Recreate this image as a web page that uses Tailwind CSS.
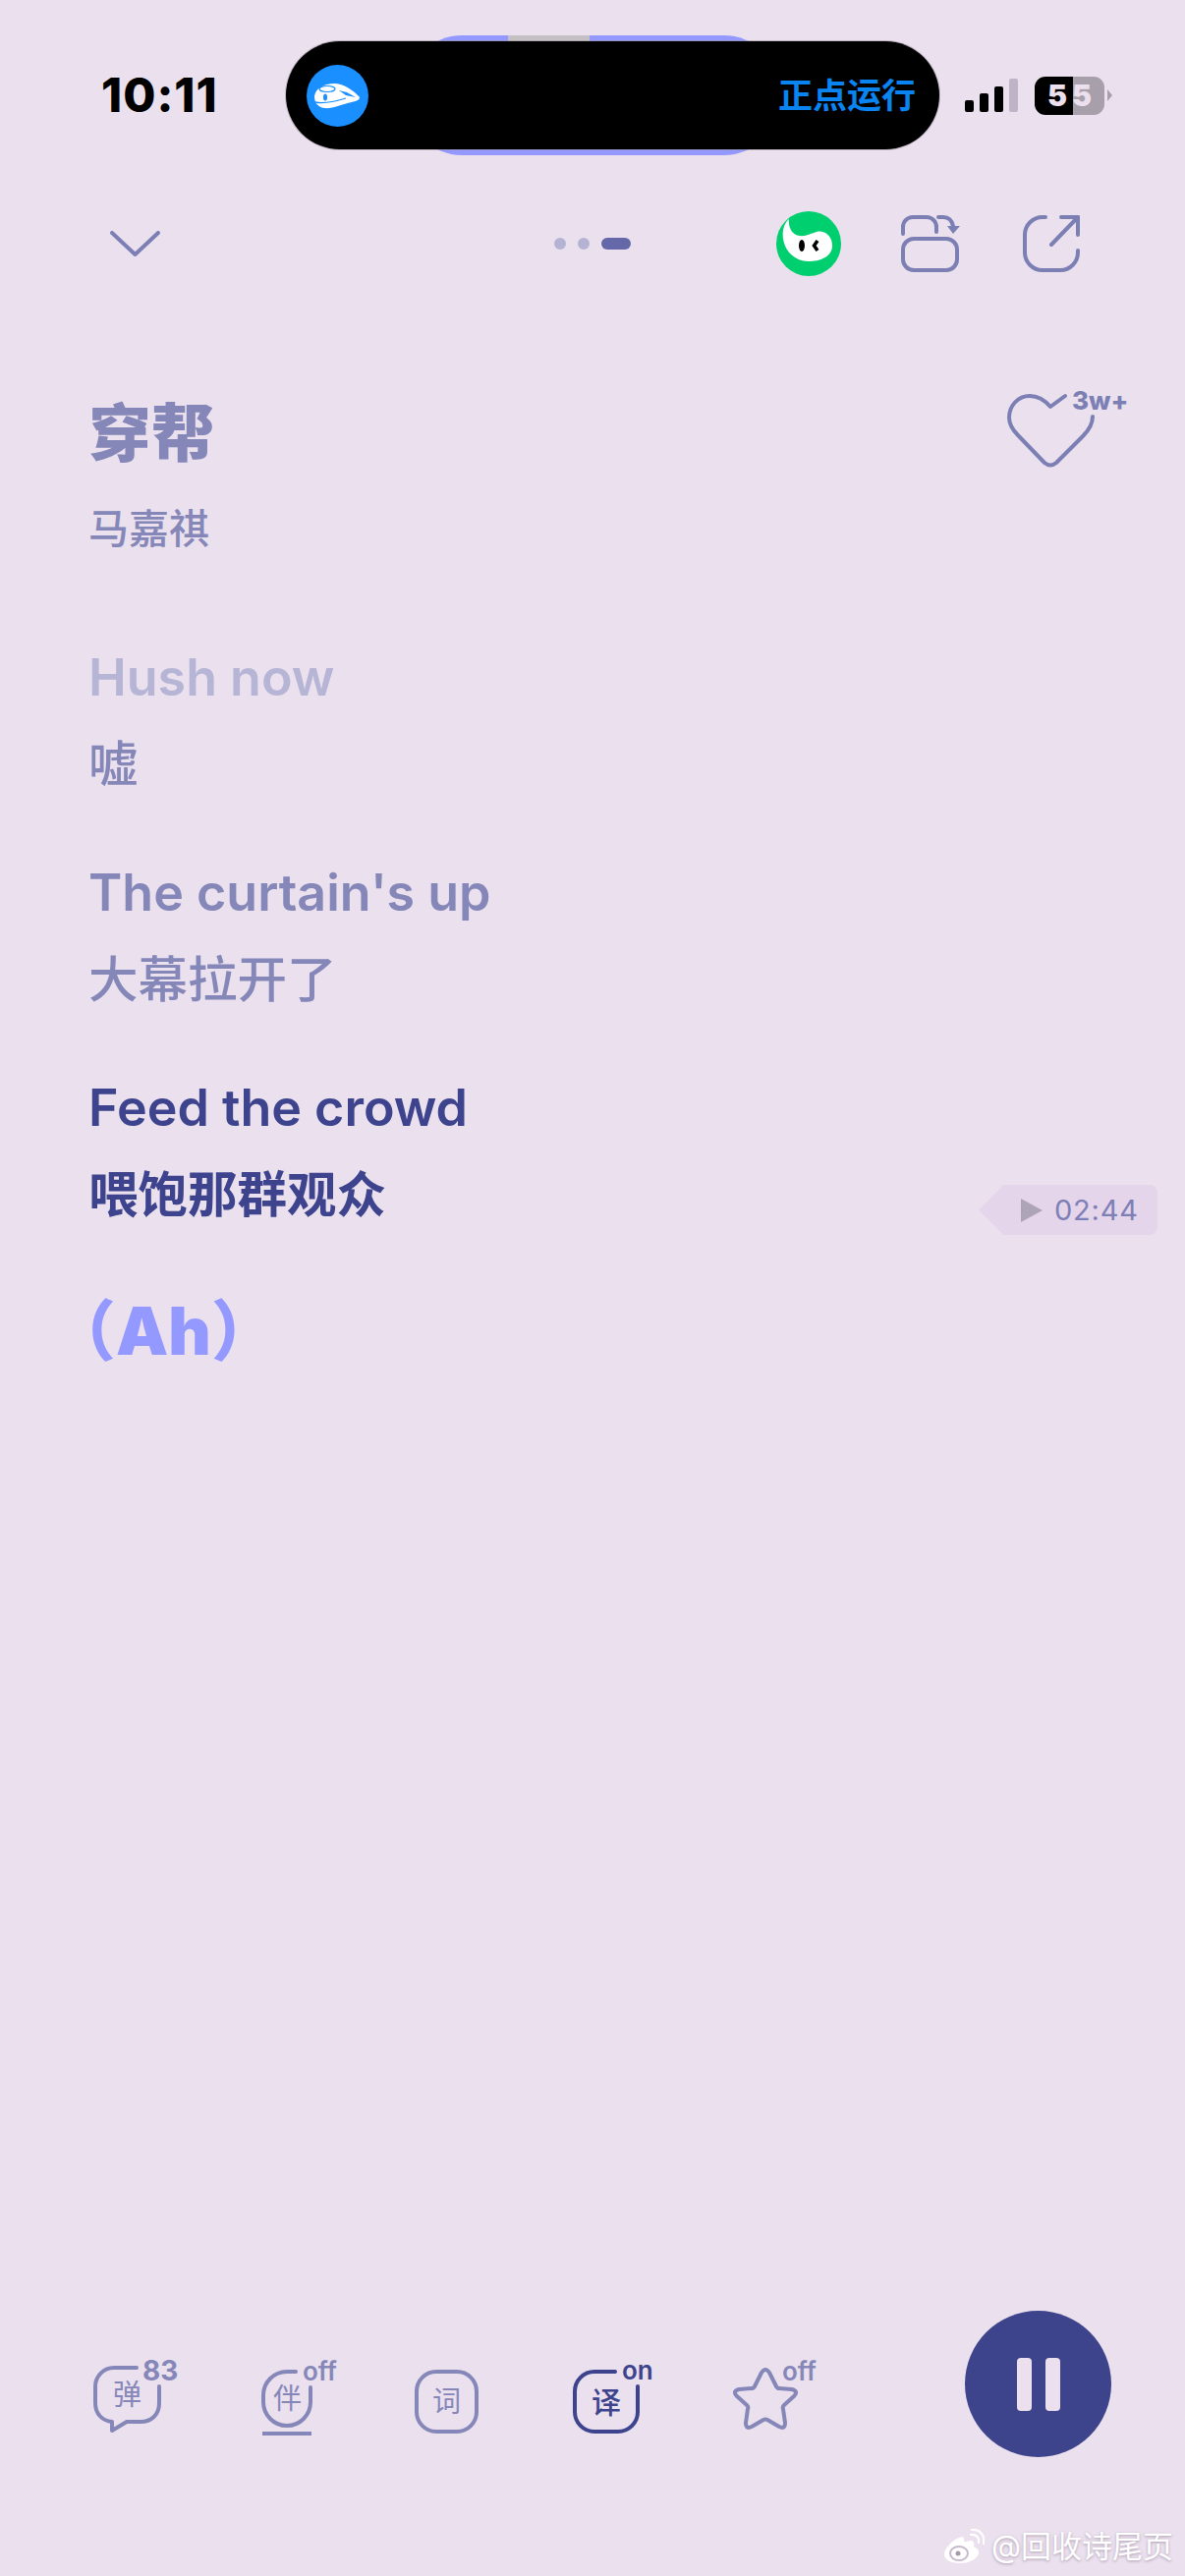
<!DOCTYPE html>
<html lang="zh-CN">
<head>
  <meta charset="UTF-8">
  <meta name="viewport" content="width=device-width, initial-scale=1.0">
  <script src="https://cdn.jsdelivr.net/npm/@tailwindcss/browser@4"></script>
  <title>穿帮</title>
</head>
<body>
  <div class="relative w-[1206px] h-[2622px] overflow-hidden flex flex-col bg-[#ebe0ee] font-[Inter,'Noto_Sans_CJK_SC',sans-serif]">

    <!-- status bar -->
    <header class="relative flex items-center h-[110px] mt-[42px]">
      <div class="absolute left-[415px] top-[-6px] w-[377px] h-[122px] rounded-[55px] bg-[#9499ff] overflow-hidden">
        <div class="ml-[102px] w-[83px] h-[6px] bg-[#c4c0c4]"></div>
      </div>
      <span class="w-[291px] pl-[103px] text-[48px] font-extrabold text-black leading-none tracking-[1px]">10:11</span>
      <div class="relative flex items-center justify-between w-[665px] h-[110px] pl-[21px] pr-[24px] rounded-[55px] bg-black shadow-[0_0_0_1px_rgba(150,140,150,0.5)]">
        <svg class="w-[63px] h-[63px]" viewBox="0 0 63 63">
          <circle cx="31.5" cy="31.5" r="31.5" fill="#1a8fff"/>
          <path d="M8 32C9 24 18 19 28 19C38 19 49 27 54 33C54 36 50 37 46 38C36 40 26 45 18 44C11 43 8 38 8 32Z" fill="#fff"/>
          <ellipse cx="21" cy="24.5" rx="8" ry="3" fill="none" stroke="#1a8fff" stroke-width="1.2"/>
          <path d="M33 26L41 28L50 33L40 31Z" fill="#1a8fff"/>
          <ellipse cx="19" cy="33" rx="2" ry="3.5" fill="#1a8fff"/>
          <path d="M9 38C18 40 30 37 40 34" fill="none" stroke="#1a8fff" stroke-width="1.3"/>
        </svg>
        <span class="text-[35px] leading-none font-bold text-[#0a84f0]">正点运行</span>
      </div>
      <div class="flex items-end gap-[6px] h-[34px] ml-[26px]">
        <div class="w-[9px] h-[12px] rounded-[2px] bg-black"></div>
        <div class="w-[9px] h-[19px] rounded-[2px] bg-black"></div>
        <div class="w-[9px] h-[26px] rounded-[2px] bg-black"></div>
        <div class="w-[9px] h-[34px] rounded-[2px] bg-[#bdb4c8]"></div>
      </div>
      <div class="flex items-center ml-[17px]">
        <div class="relative flex items-center justify-center w-[71px] h-[39px] rounded-[11px] overflow-hidden bg-[linear-gradient(to_right,#000_55%,#a79fa9_55%)]">
          <span class="text-[30px] leading-none font-black text-[#ece0ee] tracking-[5px] pl-[5px]">55</span>
        </div>
        <div class="ml-[3px] w-0 h-0 border-y-[6px] border-y-transparent border-l-[5px] border-l-[#a79fa9]"></div>
      </div>
    </header>

    <!-- top actions -->
    <nav class="flex items-center h-[66px] mt-[63px] pl-[112px]">
      <svg class="w-[51px] h-[26px]" viewBox="0 0 51 26" fill="none" stroke="#7b7fb3" stroke-width="4" stroke-linecap="round" stroke-linejoin="round">
        <path d="M2 2L25.5 24L49 2"/>
      </svg>
      <div class="flex items-center gap-[12px] ml-[401px]">
        <div class="w-[12px] h-[12px] rounded-full bg-[#b5b3d4]"></div>
        <div class="w-[12px] h-[12px] rounded-full bg-[#b5b3d4]"></div>
        <div class="w-[30px] h-[12px] rounded-full bg-[#6468a8]"></div>
      </div>
      <svg class="w-[66px] h-[66px] ml-[148px]" viewBox="0 0 66 66">
        <circle cx="33" cy="33" r="33" fill="#00cf6f"/>
        <path d="M13 8C7 13 6 22 7 28C9 42 20 51 33 51C47 51 57 45 57 35C57 25 49 19 41 21C34 23 30 26 24 25C16 24 12 16 13 8Z" fill="#fff"/>
        <ellipse cx="26" cy="35" rx="3" ry="6" fill="#000"/>
        <path d="M42 30L38.5 35L42 40" fill="none" stroke="#000" stroke-width="3.5"/>
      </svg>
      <svg class="w-[60px] h-[58px] ml-[61px]" viewBox="0 0 60 58" fill="none" stroke="#7b7fb3" stroke-width="4" stroke-linecap="round">
        <rect x="2" y="24" width="55" height="32" rx="11"/>
        <path d="M2 19V12A10 10 0 0 1 12 2H26A10 10 0 0 1 36 12V17"/>
        <path d="M38 2H43Q51 2 53 11"/>
        <path d="M47 11H60L53 19Z" fill="#7b7fb3" stroke="none"/>
      </svg>
      <svg class="w-[58px] h-[58px] ml-[64px]" viewBox="0 0 58 58" fill="none" stroke="#7b7fb3" stroke-width="4" stroke-linecap="round" stroke-linejoin="round">
        <path d="M23 2H20A18 18 0 0 0 2 20V38A18 18 0 0 0 20 56H38A18 18 0 0 0 56 38V36"/>
        <path d="M39 2H56V20"/>
        <path d="M56 2L29 30"/>
      </svg>
    </nav>

    <!-- song title -->
    <section class="relative px-[90px] mt-[129px]">
      <h1 class="text-[64px] leading-[62px] font-black text-[#8587b8]">穿帮</h1>
      <p class="mt-[46px] text-[41px] leading-[40px] font-medium text-[#8587b8]">马嘉祺</p>
      <div class="absolute left-[1025px] top-[-10px] w-[125px] h-[80px]">
        <svg class="w-[89px] h-[78px]" viewBox="0 0 89 78" fill="none" stroke="#7b7fb3" stroke-width="4" stroke-linecap="round" stroke-linejoin="round">
          <path d="M59 3L44 14C38 7 30 3 23 3C11 3 2 13 2 25C2 33 6 38 11 43L38 71Q44 76 50 71L77 44C84 37 87 31 87 24"/>
        </svg>
        <span class="absolute left-[66px] top-[-7px] text-[26px] leading-[30px] font-extrabold text-[#7b7fb3]">3w+</span>
      </div>
    </section>

    <!-- lyrics -->
    <main class="flex flex-col gap-[67px] px-[90px] mt-[100px]">
      <div class="flex flex-col gap-[24px]">
        <p class="text-[52px] leading-[64px] font-semibold text-[#b6b5d5]">Hush now</p>
        <p class="text-[50.5px] leading-[64px] font-medium text-[#8587b8]">嘘</p>
      </div>
      <div class="flex flex-col gap-[24px]">
        <p class="text-[52px] leading-[64px] font-semibold text-[#8587b8]">The curtain's up</p>
        <p class="text-[50.5px] leading-[64px] font-medium text-[#8587b8]">大幕拉开了</p>
      </div>
      <div class="flex flex-col gap-[24px]">
        <p class="text-[52px] leading-[64px] font-semibold text-[#3d438c]">Feed the crowd</p>
        <p class="text-[50.5px] leading-[64px] font-bold text-[#3d438c]">喂饱那群观众</p>
      </div>
      <p class="mt-[8px] text-[67px] leading-[64px] font-black text-[#9499ff]"><span class="-ml-[39px]">（</span>Ah<span>）</span></p>
    </main>

    <!-- seek marker -->
    <div class="absolute left-[996px] top-[1206px] flex items-center w-[182px] h-[51px] pl-[43px] bg-[#e5d5ea] rounded-r-[8px] [clip-path:polygon(14%_0,100%_0,100%_100%,14%_100%,0_50%)]">
      <div class="w-0 h-0 border-y-[12px] border-y-transparent border-l-[22px] border-l-[#aea4b8]"></div>
      <span class="ml-[12px] text-[29px] leading-none tracking-[0.8px] text-[#7d80b6]">02:44</span>
    </div>

    <!-- bottom controls -->
    <footer class="absolute left-0 top-[2352px] w-full flex items-start h-[149px] pl-[95px]">
      <div class="relative w-[69px] h-[68px] mt-[56px]">
        <svg class="absolute inset-0 w-[69px] h-[68px]" viewBox="0 0 69 68" fill="none" stroke="#8587b8" stroke-width="4" stroke-linecap="round" stroke-linejoin="round">
          <path d="M44 2H21A19 19 0 0 0 2 21V38C2 49 9 56 19 57V66L34 57H48C59 57 67 50 67 38V21"/>
        </svg>
        <span class="absolute left-[20px] top-[15px] text-[29px] leading-[30px] text-[#8587b8]">弹</span>
        <span class="absolute left-[50px] top-[-10px] text-[28px] leading-[30px] font-bold text-[#8587b8]">83</span>
      </div>
      <div class="relative w-[52px] h-[68px] ml-[102px] mt-[60px]">
        <svg class="absolute inset-0 w-[52px] h-[68px]" viewBox="0 0 52 68" fill="none" stroke="#8587b8" stroke-width="4" stroke-linecap="round">
          <path d="M35 2H26A24 24 0 0 0 2 26V33A24 24 0 0 0 50 33V18"/>
          <path d="M1 65H51" stroke-linecap="butt"/>
        </svg>
        <span class="absolute left-[12px] top-[15px] text-[29px] leading-[30px] text-[#8587b8]">伴</span>
        <span class="absolute left-[42px] top-[-13px] text-[26px] leading-[30px] font-semibold text-[#8587b8]">off</span>
      </div>
      <div class="flex items-center justify-center w-[65px] h-[65px] ml-[104px] mt-[60px] rounded-[22px] border-[4px] border-[#8587b8] text-[29px] text-[#8587b8]">词</div>
      <div class="relative w-[68px] h-[65px] ml-[96px] mt-[60px]">
        <svg class="absolute inset-0 w-[68px] h-[65px]" viewBox="0 0 68 65" fill="none" stroke="#3d438c" stroke-width="4" stroke-linecap="round">
          <path d="M43 2H22A20 20 0 0 0 2 22V43A20 20 0 0 0 22 63H46A20 20 0 0 0 66 43V17"/>
        </svg>
        <span class="absolute left-[19px] top-[18px] text-[30px] leading-[30px] font-medium text-[#3d438c]">译</span>
        <span class="absolute left-[50px] top-[-14px] text-[26px] leading-[30px] font-semibold text-[#3d438c]">on</span>
      </div>
      <div class="relative w-[66px] h-[63px] ml-[95px] mt-[58px]">
        <svg class="absolute inset-0 w-[66px] h-[63px]" viewBox="0 0 66 63" fill="none" stroke="#8587b8" stroke-width="4" stroke-linejoin="round">
          <path d="M29 5Q33 -1 37 5L44 19Q45 21 47 21L60 22Q67 24 62 29L52 38Q50 40 51 42L53 56Q53 63 47 60L35 53Q33 52 31 53L19 60Q13 63 13 56L15 42Q16 40 14 38L4 29Q-1 24 6 22L19 21Q21 21 22 19Z"/>
        </svg>
        <span class="absolute left-[50px] top-[-11px] text-[26px] leading-[30px] font-semibold text-[#8587b8]">off</span>
      </div>
      <button class="flex items-center justify-center gap-[14px] w-[149px] h-[149px] ml-[170px] rounded-full bg-[#3d448c]">
        <span class="w-[15px] h-[54px] rounded-[4px] bg-[#ece0ee]"></span>
        <span class="w-[15px] h-[54px] rounded-[4px] bg-[#ece0ee]"></span>
      </button>
    </footer>

    <!-- watermark -->
    <div class="absolute left-[961px] top-[2574px] flex items-center gap-[7px] text-white">
      <svg class="w-[41px] h-[35px]" viewBox="0 0 41 35">
        <path d="M15 9C8 12 0 20 0 26C0 32 8 35 16 35C26 35 35 30 35 24C35 20 31 19 30 18C31 15 30 12 27 12C24 12 21 14 20 13C21 9 19 7 15 9Z" fill="#fff"/>
        <ellipse cx="15" cy="25" rx="9" ry="7" fill="none" stroke="#c8bace" stroke-width="2"/>
        <circle cx="14" cy="25" r="2.5" fill="#a899b0"/>
        <path d="M27 6C32 5 36 9 35 14M28 1C36 0 42 7 40 15" fill="none" stroke="#fff" stroke-width="2.2" stroke-linecap="round"/>
      </svg>
      <span class="text-[31px] leading-none text-white [text-shadow:0_1px_3px_rgba(90,70,100,0.45)]">@回收诗尾页</span>
    </div>
  </div>
</body>
</html>
